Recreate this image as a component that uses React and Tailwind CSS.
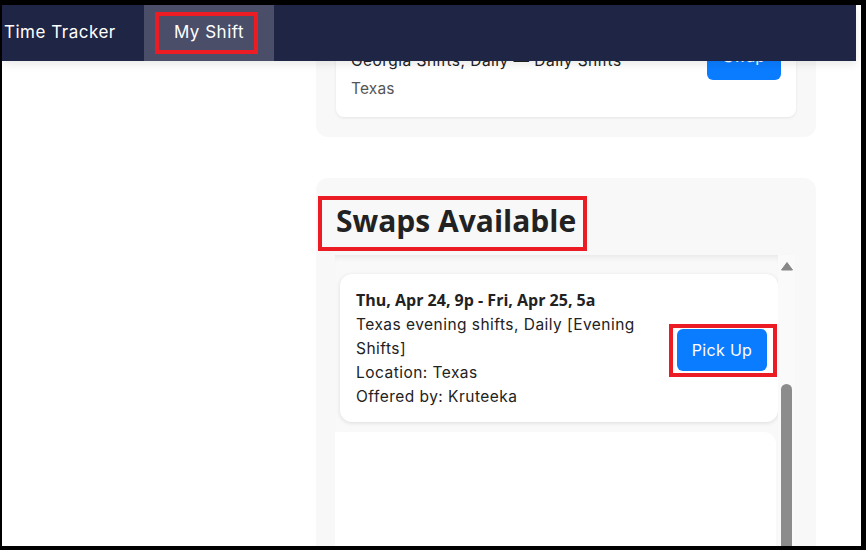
export default function App() {
  const body = { fontFamily: "Inter, 'Noto Sans', sans-serif" };
  const head = { fontFamily: "'Open Sans', 'Noto Sans', sans-serif" };
  return (
    <div className="w-[866px] h-[550px] bg-black pt-[5px] pl-[2px] pr-[5px] pb-[4px]">
      <div className="relative w-full h-full bg-white overflow-hidden" style={body}>
        {/* content column */}
        <div className="ml-[314px] w-[500px] flex flex-col">
          {/* top section (scrolled under the navbar) */}
          <div className="bg-[#f8f8f8] rounded-b-xl px-5 pb-5">
            <div className="bg-white rounded-b-lg shadow-[0_1px_3px_rgba(0,0,0,0.08)] flex justify-between pl-[15px] pr-[15px] pt-[20px] pb-4">
              <div className="text-[15.5px] tracking-[0.03em] leading-6 text-[#222]">
                <div className="font-bold tracking-normal" style={head}>Wed, Apr 23, 9a - 5p</div>
                <div>Georgia Shifts, Daily  —  Daily Shifts</div>
                <div className="mt-1 text-[#555] tracking-[0.01em]">Texas</div>
              </div>
              <div className="self-start mt-[7px] w-[74px] h-[48px] rounded-md bg-[#0a7cff] text-white text-[16px] flex items-center justify-center">
                Swap
              </div>
            </div>
          </div>

          {/* swaps available */}
          <div className="mt-[41px] bg-[#f8f8f8] rounded-xl h-[400px] flex flex-col">
            <div className="mt-[18px] ml-[2px] w-[269px] h-[55px] border-4 border-[#ec1c24] flex items-center pl-[14px] pb-[6px]">
              <h2 className="text-[30px] font-bold text-[#222] leading-none" style={head}>Swaps Available</h2>
            </div>
            <div className="mt-[4px] ml-[19px] w-[460px] flex-1 flex overflow-hidden">
              <div className="flex-1 flex flex-col bg-[#f9f9f9] shadow-[inset_0_6px_6px_-4px_rgba(0,0,0,0.08)] pt-[19px]">
                <div className="ml-[5px] bg-white rounded-xl shadow-[0_1px_4px_rgba(0,0,0,0.12)] flex items-center justify-between pl-4 pr-[1px] pt-[14px] pb-[13px]">
                  <div className="text-[15.5px] tracking-[0.03em] leading-6 text-[#222]">
                    <div className="font-bold text-[16px] leading-[25px] tracking-normal" style={head}>Thu, Apr 24, 9p - Fri, Apr 25, 5a</div>
                    <div>Texas evening shifts, Daily [Evening</div>
                    <div>Shifts]</div>
                    <div>Location: Texas</div>
                    <div>Offered by: Kruteeka</div>
                  </div>
                  <div className="border-4 border-[#ec1c24] pl-[4px] pr-[6px] pt-[1px] pb-[2px] mt-[4px]">
                    <div className="w-[90px] h-[42px] rounded-md bg-[#0a7cff] text-white text-[16px] tracking-[0.02em] flex items-center justify-center">
                      Pick Up
                    </div>
                  </div>
                </div>
                <div className="mt-[10px] mr-[2px] flex-1 bg-white rounded-tr-xl"></div>
              </div>
              {/* scrollbar */}
              <div className="w-[17px] bg-[#fafafa] flex flex-col items-center">
                <svg width="14" height="10" viewBox="0 0 14 10" className="mt-[6px]">
                  <path d="M7 1.5 L12.5 9 L1.5 9 Z" fill="#888888" stroke="#888888" strokeWidth="1" strokeLinejoin="round" />
                </svg>
                <div className="mt-[113px] w-[11px] flex-1 bg-[#8c8c8c] rounded-t-full"></div>
              </div>
            </div>
          </div>
        </div>

        {/* navbar */}
        <div className="absolute top-0 left-0 w-[854px] h-[56px] bg-[#1f2544] flex items-stretch shadow-[0_4px_8px_rgba(0,0,0,0.08)]">
          <div className="flex items-center pl-[2px] w-[142px] text-white text-[17px] tracking-[0.03em]">Time Tracker</div>
          <div className="w-[130px] bg-[#4a4e69] flex items-center pl-[11px]">
            <div className="border-4 border-[#ec1c24] w-[103px] h-[42px] flex items-center justify-center pl-[5px] text-white text-[17px] tracking-[0.03em]">
              My Shift
            </div>
          </div>
        </div>
      </div>
    </div>
  );
}
